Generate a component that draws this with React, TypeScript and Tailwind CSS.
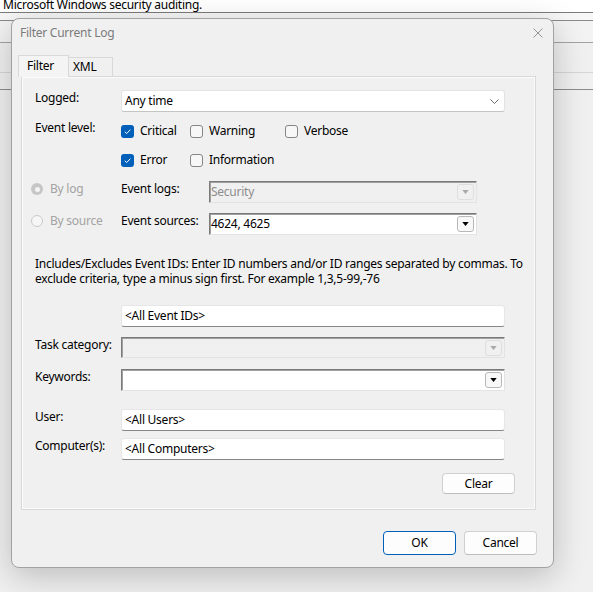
import React from 'react';

interface CheckProps {
  label: string;
  checked?: boolean;
}

const Check: React.FC<CheckProps> = ({ label, checked = false }) => (
  <div className="flex h-[22px] items-center gap-[6px]">
    {checked ? (
      <span className="flex h-[13px] w-[13px] items-center justify-center rounded-[3px] bg-[#005fb8]">
        <svg viewBox="0 0 10 10" className="h-[9px] w-[9px]">
          <path d="M2 5.3 L4.1 7.3 L8.2 2.9" stroke="#fff" strokeWidth="1.1" fill="none" />
        </svg>
      </span>
    ) : (
      <span className="h-[13px] w-[13px] rounded-[3px] border border-[#858585] bg-[#f7f7f7]" />
    )}
    <span>{label}</span>
  </div>
);

const DropButton: React.FC<{ disabled?: boolean }> = ({ disabled = false }) => (
  <span
    className={`flex h-[16px] w-[17px] items-center justify-center rounded-[3px] border ${
      disabled ? 'border-[#dedede] bg-[#f0f0f0]' : 'border-[#b8b8b8] bg-[#f8f8f8]'
    }`}
  >
    <svg viewBox="0 0 8 5" className="h-[4px] w-[7px]">
      <path d="M0 0 H8 L4 5 Z" fill={disabled ? '#a8a8a8' : '#000'} />
    </svg>
  </span>
);

// old style sunken combo box
const ClassicCombo: React.FC<{ value?: string; disabled?: boolean; className?: string }> = ({
  value = '',
  disabled = false,
  className = '',
}) => (
  <div
    className={`flex items-center justify-between border border-t-[#7a7a7a] border-l-[#7a7a7a] border-r-[#e3e3e3] border-b-[#e3e3e3] pr-[2px] shadow-[inset_1px_1px_0_#a0a0a0] ${
      disabled ? 'bg-[#f0f0f0] text-[#8d8d8d]' : 'bg-white text-black'
    } ${className}`}
  >
    <span className="pl-[1px] leading-[16px]">{value}</span>
    <DropButton disabled={disabled} />
  </div>
);

const TextBox: React.FC<{ value: string }> = ({ value }) => (
  <div className="flex h-[22px] w-[384px] items-center rounded-[3px] border border-[#e6e6e6] border-b-[#868686] bg-white pl-[3px] leading-[16px]">
    {value}
  </div>
);

const Label: React.FC<{ children: React.ReactNode }> = ({ children }) => (
  <div className="w-[86px] shrink-0 leading-[16px]">{children}</div>
);

const Radio: React.FC<{ label: string; checked?: boolean }> = ({ label, checked = false }) => (
  <div className="flex w-[90px] shrink-0 items-center gap-[7px] pt-[1px] leading-[14px] text-[#a3a3a3]">
    {checked ? (
      <span className="flex h-[12px] w-[12px] items-center justify-center rounded-full bg-[#c6c6c6]">
        <span className="h-[5px] w-[5px] rounded-full bg-[#f4f4f4]" />
      </span>
    ) : (
      <span className="h-[12px] w-[12px] rounded-full border border-[#cacaca] bg-[#f6f6f6]" />
    )}
    <span>{label}</span>
  </div>
);

const Button: React.FC<{ label: string; primary?: boolean; className?: string }> = ({
  label,
  primary = false,
  className = '',
}) => (
  <div
    className={`flex w-[73px] items-center justify-center rounded-[4px] border bg-[#fdfdfd] ${
      primary ? 'border-[#005fb8]' : 'border-[#d0d0d0] border-b-[#bdbdbd]'
    } ${className}`}
  >
    {label}
  </div>
);

export default function App() {
  return (
    <div className="relative flex h-[592px] w-[593px] flex-col overflow-hidden bg-[#f0f0f0] font-['Noto_Sans',sans-serif] text-[12px] tracking-[-0.25px] text-black">
      {/* event viewer behind the dialog */}
      <div className="h-[12px] overflow-hidden bg-white pl-[3px]">
        <div className="-mt-[3px] leading-[15px]">Microsoft Windows security auditing.</div>
      </div>
      <div className="h-[8px] border-t border-[#7c7c7c] bg-[#f7f7f7]" />
      <div className="h-[22px] border-t border-[#8a8a8a] bg-[#f3f3f3]" />
      <div className="h-[30px] border-t border-[#a3a3a3] bg-[#f0f0f0]" />
      <div className="h-[17px] border-t border-[#d6d6d6] bg-[#f0f0f0]" />
      <div className="flex-1 border-t border-[#8c8c8c] bg-[#f0f0f0]" />

      {/* Filter Current Log dialog */}
      <div className="absolute left-[11px] top-[18px] flex h-[550px] w-[543px] flex-col rounded-[8px] border border-[#a2a2a2] bg-[#f0f0f0] shadow-[0_8px_32px_rgba(0,0,0,0.22)]">
        <div className="flex h-[28px] items-center justify-between pl-[8px] pr-[10px]">
          <span className="text-[#7b7b7b]">Filter Current Log</span>
          <svg viewBox="0 0 10 10" className="h-[10px] w-[10px]">
            <path d="M0.5 0.5 L9.5 9.5 M9.5 0.5 L0.5 9.5" stroke="#8a8a8a" strokeWidth="0.9" />
          </svg>
        </div>

        <div className="ml-[6px] mt-[8px] flex h-[21px] items-end">
          <div className="relative z-10 -mb-[1px] flex h-[22px] w-[51px] items-center border border-b-0 border-[#d9d9d9] bg-[#f4f4f4] pb-[2px] pl-[8px]">
            Filter
          </div>
          <div className="flex h-[19px] w-[44px] items-center border border-b-0 border-l-0 border-[#d9d9d9] bg-[#f0f0f0] pl-[4px]">
            XML
          </div>
        </div>

        <div className="ml-[9px] flex h-[434px] w-[515px] flex-col border border-[#d9d9d9] bg-[#f0f0f0] pl-[13px] shadow-[inset_1px_1px_0_#fbfbfb,inset_-1px_-1px_0_#fbfbfb]">
          <div className="mt-[13px] flex items-start">
            <Label>Logged:</Label>
            <div className="flex h-[22px] w-[384px] items-center justify-between rounded-[3px] border border-[#e3e3e3] border-b-[#c4c4c4] bg-white pl-[3px] pr-[5px]">
              <span className="leading-[16px]">Any time</span>
              <svg viewBox="0 0 9 5" className="h-[5px] w-[9px]">
                <path d="M0.5 0.5 L4.5 4.5 L8.5 0.5" stroke="#5c5c5c" strokeWidth="0.9" fill="none" />
              </svg>
            </div>
          </div>

          <div className="mt-[8px] flex items-start">
            <Label>Event level:</Label>
            <div className="flex flex-col gap-[7px]">
              <div className="flex">
                <div className="w-[69px]">
                  <Check label="Critical" checked />
                </div>
                <div className="w-[95px]">
                  <Check label="Warning" />
                </div>
                <Check label="Verbose" />
              </div>
              <div className="flex">
                <div className="w-[69px]">
                  <Check label="Error" checked />
                </div>
                <Check label="Information" />
              </div>
            </div>
          </div>

          <div className="-ml-[4px] mt-[10px] flex items-start">
            <Radio label="By log" checked />
            <div className="w-[88px] shrink-0 leading-[16px]">Event logs:</div>
            <ClassicCombo value="Security" disabled className="h-[22px] w-[268px]" />
          </div>

          <div className="-ml-[4px] mt-[10px] flex items-start">
            <Radio label="By source" />
            <div className="w-[88px] shrink-0 leading-[16px]">Event sources:</div>
            <ClassicCombo value="4624, 4625" className="h-[22px] w-[268px]" />
          </div>

          <p className="mt-[21px] w-[495px] leading-[15px]">
            Includes/Excludes Event IDs: Enter ID numbers and/or ID ranges separated by commas. To exclude criteria,
            type a minus sign first. For example 1,3,5-99,-76
          </p>

          <div className="mt-[19px] flex">
            <div className="w-[86px] shrink-0" />
            <TextBox value="<All Event IDs>" />
          </div>

          <div className="mt-[10px] flex items-start">
            <Label>Task category:</Label>
            <ClassicCombo disabled className="h-[21px] w-[384px]" />
          </div>

          <div className="mt-[11px] flex items-start">
            <Label>Keywords:</Label>
            <ClassicCombo className="h-[22px] w-[384px]" />
          </div>

          <div className="mt-[18px] flex items-start">
            <Label>User:</Label>
            <TextBox value="<All Users>" />
          </div>

          <div className="mt-[7px] flex items-start">
            <Label>Computer(s):</Label>
            <TextBox value="<All Computers>" />
          </div>

          <div className="mt-[13px] flex justify-end pr-[20px]">
            <Button label="Clear" className="h-[21px]" />
          </div>
        </div>

        <div className="mt-[21px] flex justify-end gap-[8px] pr-[16px]">
          <Button label="OK" primary className="h-[24px]" />
          <Button label="Cancel" className="h-[24px]" />
        </div>
      </div>
    </div>
  );
}
